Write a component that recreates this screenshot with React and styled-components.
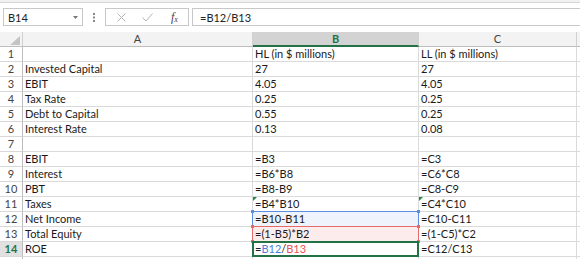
import React from 'react'
import styled, { createGlobalStyle } from 'styled-components'

const GlobalStyle = createGlobalStyle`
  body {
    margin: 0;
    background: #fff;
    font-family: Lato, "Liberation Sans", sans-serif;
  }
`

const Page = styled.div`
  width: 580px;
  height: 259px;
  overflow: hidden;
  background: #fff;
`

const TopStrip = styled.div`
  height: 2px;
  background: #f1f1f1;
  border-bottom: 1px solid #d6d6d6;
`

const FormulaBar = styled.div`
  display: flex;
  align-items: center;
  height: 18px;
  padding: 5px 0 6px 3px;
`

const Box = styled.div`
  height: 18px;
  box-sizing: border-box;
  border: 1px solid #c8c8c8;
  background: #fff;
  display: flex;
  align-items: center;
  font-size: 11px;
  color: #222;
`

const NameBox = styled(Box)`
  width: 80px;
  padding: 0 4px;
  justify-content: space-between;
`

const Dots = styled.div`
  width: 22px;
  display: flex;
  justify-content: center;
`

const IconBox = styled(Box)`
  width: 84px;
  padding: 0 0 0 11px;
  gap: 16px;
`

const Fx = styled.span`
  font-family: "Liberation Serif", serif;
  font-style: italic;
  font-size: 12px;
  color: #444;
  margin-left: 2px;
  sub {
    font-size: 8px;
    vertical-align: -1px;
  }
`

const Input = styled(Box)`
  flex: 1;
  margin-left: 3px;
  padding: 0 7px;
  border-right: none;
`

const Sheet = styled.div`
  display: grid;
  grid-template-columns: 23px 230px 166px 158px 1fr;
  grid-auto-rows: 15px;
`

const ColHead = styled.div`
  box-sizing: border-box;
  background: ${p => (p.$active ? '#d3d3d3' : '#f3f3f3')};
  border-right: 1px solid #d0d0d0;
  border-bottom: ${p => (p.$active ? '2px solid #217346' : '1px solid #bdbdbd')};
  color: ${p => (p.$active ? '#217346' : '#444')};
  font-weight: ${p => (p.$active ? 700 : 400)};
  font-size: 11px;
  line-height: 14px;
  text-align: center;
  position: relative;
`

const Corner = styled(ColHead)`
  svg {
    position: absolute;
    right: 2px;
    bottom: 1px;
  }
`

const RowHead = styled.div`
  box-sizing: border-box;
  background: ${p => (p.$active ? '#e1e1e1' : '#fff')};
  border-right: 1px solid #bdbdbd;
  border-bottom: 1px solid #d8d8d8;
  color: ${p => (p.$active ? '#217346' : '#444')};
  font-weight: ${p => (p.$active ? 700 : 400)};
  font-size: 11px;
  line-height: 14px;
  text-align: center;
`

const marks = {
  blue: { line: '#5d8ee0', fill: '#eef3fc', width: 1 },
  red: { line: '#e56b6b', fill: '#fcecec', width: 1 },
  green: { line: '#217346', fill: '#fff', width: 2 },
}

const Cell = styled.div`
  box-sizing: border-box;
  position: relative;
  background: ${p => (p.$mark ? marks[p.$mark].fill : '#fff')};
  border-right: 1px solid #dadada;
  border-bottom: 1px solid #dadada;
  padding: 0 2px;
  font-size: 11px;
  line-height: 14px;
  color: #1a1a1a;
  white-space: nowrap;
`

const Outline = styled.div`
  position: absolute;
  left: -1px;
  top: -1px;
  right: -1px;
  bottom: -1px;
  border: ${p => marks[p.$mark].width}px solid ${p => marks[p.$mark].line};
  pointer-events: none;
  z-index: ${p => (p.$mark === 'green' ? 3 : 2)};
`

const Handle = styled.span`
  position: absolute;
  width: 3px;
  height: 3px;
  background: ${p => marks[p.$mark].line};
  ${p => (p.$top ? 'top: -2px;' : 'bottom: -2px;')}
  ${p => (p.$left ? 'left: -2px;' : 'right: -2px;')}
`

const Flag = styled.span`
  position: absolute;
  left: 0;
  top: 0;
  width: 0;
  height: 0;
  border-top: 4px solid #1f8a3c;
  border-right: 4px solid transparent;
`

const Ref = styled.span`
  color: ${p => p.$color};
`

const rows = [
  ['', 'HL (in $ millions)', 'LL (in $ millions)'],
  ['Invested Capital', '27', '27'],
  ['EBIT', '4.05', '4.05'],
  ['Tax Rate', '0.25', '0.25'],
  ['Debt to Capital', '0.55', '0.25'],
  ['Interest Rate', '0.13', '0.08'],
  ['', '', ''],
  ['EBIT', '=B3', '=C3'],
  ['Interest', '=B6*B8', '=C6*C8'],
  ['PBT', '=B8-B9', '=C8-C9'],
  ['Taxes', '=B4*B10', '=C4*C10'],
  ['Net Income', '=B10-B11', '=C10-C11'],
  ['Total Equity', '=(1-B5)*B2', '=(1-C5)*C2'],
  ['ROE', 'ROE_FORMULA', '=C12/C13'],
]

const markFor = { 12: 'blue', 13: 'red', 14: 'green' }

function Mark({ mark }) {
  return (
    <Outline $mark={mark}>
      {mark !== 'green' && (
        <>
          <Handle $mark={mark} $top $left />
          <Handle $mark={mark} $top />
          <Handle $mark={mark} $left />
          <Handle $mark={mark} />
        </>
      )}
    </Outline>
  )
}

export default function App() {
  return (
    <Page>
      <GlobalStyle />
      <TopStrip />
      <FormulaBar>
        <NameBox>
          <span>B14</span>
          <svg width="5" height="3" viewBox="0 0 5 3">
            <path d="M0 0h5L2.5 3z" fill="#777" />
          </svg>
        </NameBox>
        <Dots>
          <svg width="2" height="9" viewBox="0 0 2 9">
            <rect x="0" y="0" width="2" height="2" fill="#888" />
            <rect x="0" y="3.5" width="2" height="2" fill="#888" />
            <rect x="0" y="7" width="2" height="2" fill="#888" />
          </svg>
        </Dots>
        <IconBox>
          <svg width="9" height="9" viewBox="0 0 9 9">
            <path d="M0.5 0.5l8 8M8.5 0.5l-8 8" stroke="#b5b5b5" strokeWidth="1" fill="none" />
          </svg>
          <svg width="11" height="9" viewBox="0 0 11 9">
            <path d="M0.5 4.5l3.5 3.5 6.5-7.5" stroke="#b5b5b5" strokeWidth="1" fill="none" />
          </svg>
          <Fx>f<sub>x</sub></Fx>
        </IconBox>
        <Input>=B12/B13</Input>
      </FormulaBar>
      <Sheet>
        <Corner>
          <svg width="10" height="9" viewBox="0 0 10 9">
            <path d="M10 0v9H0z" fill="#c4c4c4" />
          </svg>
        </Corner>
        <ColHead>A</ColHead>
        <ColHead $active>B</ColHead>
        <ColHead>C</ColHead>
        <ColHead />
        {rows.map((r, i) => {
          const n = i + 1
          const mark = markFor[n]
          return (
            <React.Fragment key={n}>
              <RowHead $active={n === 14}>{n}</RowHead>
              <Cell>{r[0]}</Cell>
              <Cell $mark={mark}>
                {mark && <Mark mark={mark} />}
                {n === 11 && <Flag />}
                {r[1] === 'ROE_FORMULA' ? (
                  <>
                    =<Ref $color="#4a7fd6">B12</Ref>/<Ref $color="#e0555a">B13</Ref>
                  </>
                ) : (
                  r[1]
                )}
              </Cell>
              <Cell>
                {n === 11 && <Flag />}
                {r[2]}
              </Cell>
              <Cell />
            </React.Fragment>
          )
        })}
        <RowHead />
        <Cell />
        <Cell />
        <Cell />
        <Cell />
      </Sheet>
    </Page>
  )
}
